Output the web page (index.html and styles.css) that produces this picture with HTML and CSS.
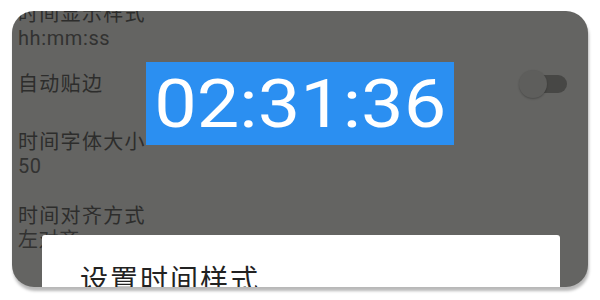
FILE: index.html
```html
<!DOCTYPE html>
<html lang="zh-CN">
<head>
<meta charset="utf-8">
<title>悬浮时钟设置</title>
<link rel="stylesheet" href="styles.css">
</head>
<body>
<div class="frame">
  <div class="panel">
    <div class="list">
      <div class="item">
        <div class="title">时间显示样式</div>
        <div class="value">hh:mm:ss</div>
      </div>
      <div class="item item-switch">
        <div class="title">自动贴边</div>
        <div class="switch"><span class="track"></span><span class="thumb"></span></div>
      </div>
      <div class="item item-size">
        <div class="title">时间字体大小</div>
        <div class="value">50</div>
      </div>
      <div class="item item-align">
        <div class="title">时间对齐方式</div>
        <div class="value">左对齐</div>
      </div>
    </div>
    <div class="clock"><span class="clock-text">02:31:36</span></div>
    <div class="dialog">
      <div class="dialog-title">设置时间样式</div>
    </div>
  </div>
</div>
</body>
</html>
```

FILE: styles.css
```css
html, body {
  margin: 0;
  padding: 0;
  background: #ffffff;
}
body {
  width: 600px;
  height: 300px;
  overflow: hidden;
  font-family: Roboto, "Noto Sans CJK SC", sans-serif;
}
.frame {
  padding: 11px 12px 13px 12px;
}
.panel {
  position: relative;
  width: 576px;
  height: 276px;
  border-radius: 22px;
  background: #646462;
  overflow: hidden;
  box-shadow: 1px 4px 3px rgba(0, 0, 0, 0.28);
}
.list {
  margin-top: -9px;
  padding: 0 21px 0 6px;
  color: #2d2d2c;
  font-size: 20px;
  letter-spacing: 1.3px;
}
.title, .value {
  line-height: 24px;
  height: 24px;
  white-space: nowrap;
}
.value {
  color: #323231;
  letter-spacing: 0.6px;
}
.item-switch {
  margin-top: 22px;
  display: flex;
  align-items: center;
  justify-content: space-between;
  height: 24px;
}
.item-size {
  margin-top: 34px;
}
.item-align {
  margin-top: 26px;
}
.switch {
  position: relative;
  width: 48px;
  height: 28px;
  flex: none;
}
.track {
  position: absolute;
  left: 2px;
  top: 5px;
  width: 46px;
  height: 18px;
  border-radius: 9px;
  background: #474745;
}
.thumb {
  position: absolute;
  left: 0;
  top: 0;
  width: 28px;
  height: 28px;
  border-radius: 50%;
  background: #5e5e5c;
  box-shadow: 0 1px 2px rgba(0, 0, 0, 0.25);
}
.clock {
  position: absolute;
  left: 134px;
  top: 51px;
  width: 308px;
  height: 83px;
  background: #2b8ff1;
  display: flex;
  align-items: center;
  justify-content: center;
}
.clock-text {
  display: inline-block;
  color: #ffffff;
  font-family: Roboto, sans-serif;
  font-size: 67px;
  line-height: 83px;
  transform: scaleX(1.13);
  margin-top: 2px;
}
.dialog {
  position: absolute;
  left: 30px;
  top: 224px;
  width: 518px;
  height: 80px;
  background: #ffffff;
  border-radius: 3px 3px 0 0;
}
.dialog-title {
  padding: 28px 0 0 38px;
  font-family: "Noto Sans CJK SC", sans-serif;
  font-size: 28px;
  line-height: 30px;
  letter-spacing: 2px;
  color: #222222;
}
```
